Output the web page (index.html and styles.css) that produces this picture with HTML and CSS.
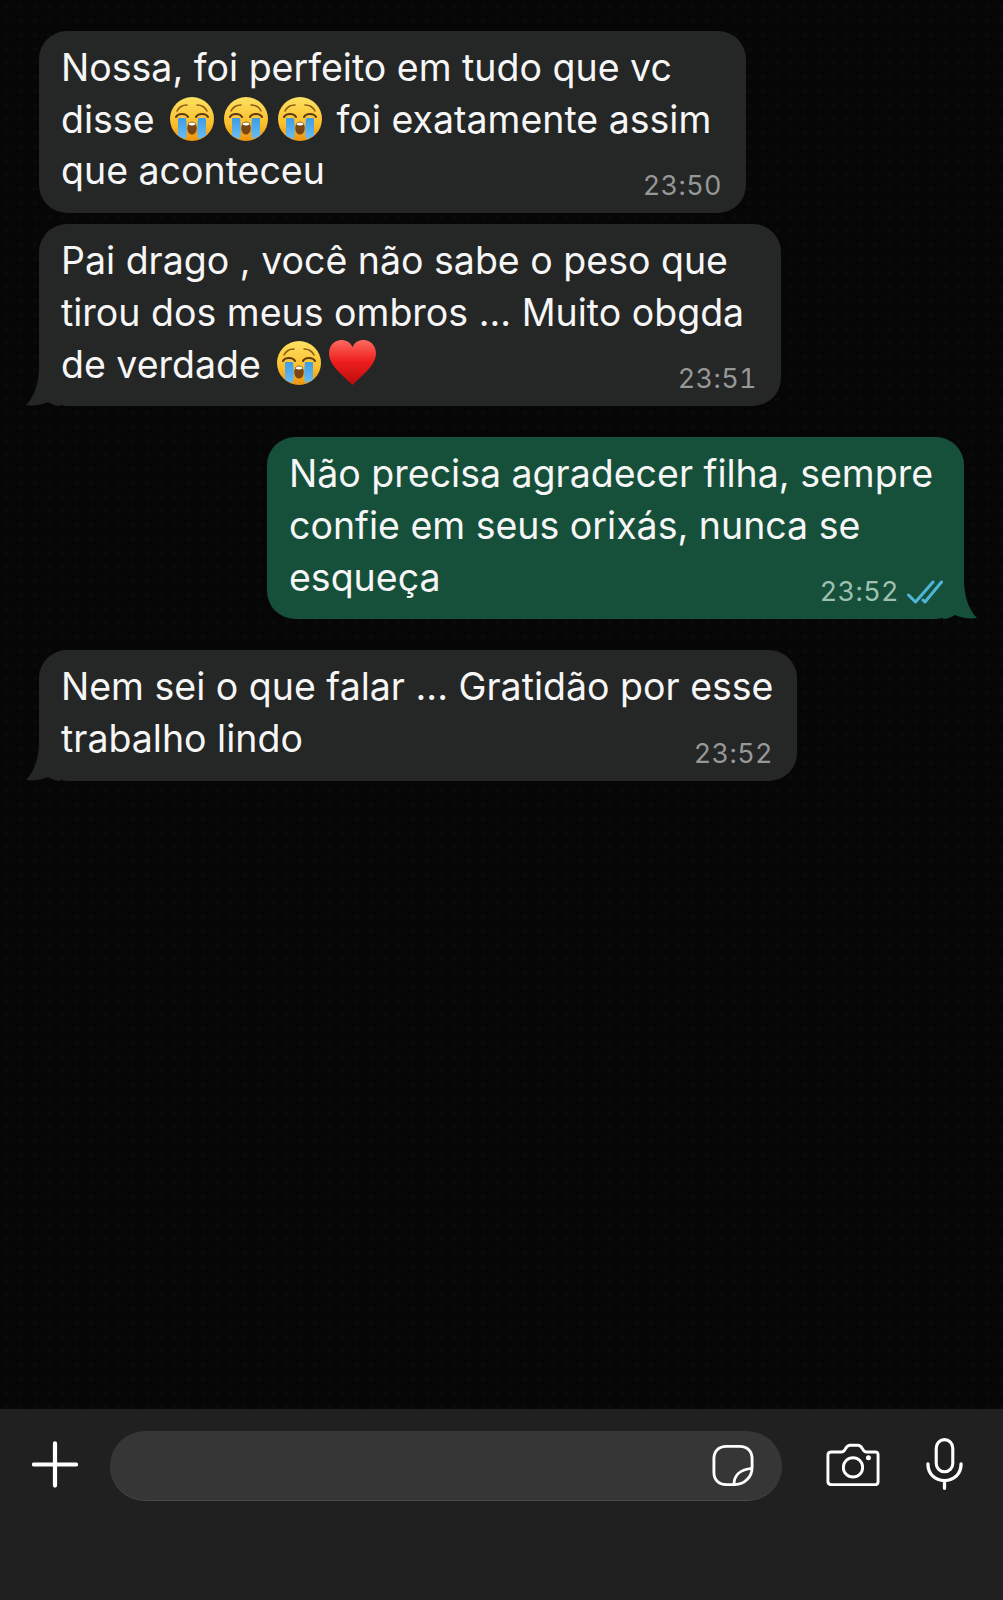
FILE: index.html
```html
<!doctype html>
<html>
<head>
<meta charset="UTF-8">
<title>Conversa</title>
<link rel="stylesheet" href="styles.css">
</head>

<body>
<svg class="defs" width="0" height="0">
	<defs>
		<linearGradient id="faceGrad" x1="0" y1="0" x2="0" y2="1">
			<stop offset="0" stop-color="#fde163"/>
			<stop offset="0.6" stop-color="#fbbf2c"/>
			<stop offset="1" stop-color="#ee9410"/>
		</linearGradient>
		<linearGradient id="tearGrad" x1="0" y1="0" x2="0" y2="1">
			<stop offset="0" stop-color="#3f9de6"/>
			<stop offset="1" stop-color="#69bdf2"/>
		</linearGradient>
		<linearGradient id="heartGrad" x1="0" y1="0" x2="0" y2="1">
			<stop offset="0" stop-color="#fd6a5e"/>
			<stop offset="0.5" stop-color="#ee1c1c"/>
			<stop offset="1" stop-color="#b80d0d"/>
		</linearGradient>
		<clipPath id="faceClip"><circle cx="22" cy="22" r="22"/></clipPath>
		<symbol id="cry" viewBox="0 0 44 44">
			<circle cx="22" cy="22" r="22" fill="url(#faceGrad)"/>
			<path d="M7 14c2-4 6-6 10-6M37 14c-2-4-6-6-10-6" fill="none" stroke="#8a5a12" stroke-width="1.5" stroke-linecap="round"/>
			<g clip-path="url(#faceClip)">
				<path d="M8 21h8c1 8 1 15 0 21l-8-3z" fill="url(#tearGrad)"/>
				<path d="M36 21h-8c-1 8-1 15 0 21l8-3z" fill="url(#tearGrad)"/>
			</g>
			<path d="M6 20c2-4 10-4 12 0M26 20c2-4 10-4 12 0" fill="none" stroke="#5e3a0c" stroke-width="2" stroke-linecap="round"/>
			<ellipse cx="22" cy="31" rx="4.8" ry="6.6" fill="#7a4712"/>
			<path d="M18.4 27.5c1-2.6 6.2-2.6 7.2 0-2 1.2-5.2 1.2-7.2 0z" fill="#fff"/>
		</symbol>
		<symbol id="tail" viewBox="0 0 34 40">
			<path d="M13 0C13 16 9 30 0 39c7 1 16 0 22-3 4 2 7 4 12 4V0z" fill="currentColor"/>
		</symbol>
	</defs>
</svg>

<div class="screen">
	<div class="chat">
		<div class="bubble in w1">
			<div class="line">Nossa, foi perfeito em tudo que vc</div>
			<div class="line">disse <span class="emojis"><svg class="emoji"><use href="#cry"/></svg><svg class="emoji"><use href="#cry"/></svg><svg class="emoji"><use href="#cry"/></svg></span> foi exatamente assim</div>
			<div class="line last"><span>que aconteceu</span><span class="time">23:50</span></div>
		</div>
		<div class="bubble in w2 grouped">
			<svg class="tail tail-left"><use href="#tail"/></svg>
			<div class="line">Pai drago , você não sabe o peso que</div>
			<div class="line">tirou dos meus ombros ... Muito obgda</div>
			<div class="line last"><span>de verdade <svg class="emoji solo"><use href="#cry"/></svg> <svg class="heart" viewBox="0 0 46 44"><path d="M23 44C14 35 0 25 0 13 0 5 6 0 12 0c5 0 9 2 11 7 2-5 6-7 11-7 6 0 12 5 12 13 0 12-14 22-23 31z" fill="url(#heartGrad)"/></svg></span><span class="time">23:51</span></div>
		</div>
		<div class="bubble out w3">
			<svg class="tail tail-right"><use href="#tail"/></svg>
			<div class="line">Não precisa agradecer filha, sempre</div>
			<div class="line">confie em seus orixás, nunca se</div>
			<div class="line last"><span>esqueça</span><span class="time">23:52<svg class="ticks" viewBox="0 0 36 25"><path d="M1.5 15l7 7L26 2M16 20l2 2L34.5 2" fill="none" stroke="#4fb6d9" stroke-width="3" stroke-linecap="round" stroke-linejoin="round"/></svg></span></div>
		</div>
		<div class="bubble in w4">
			<svg class="tail tail-left"><use href="#tail"/></svg>
			<div class="line">Nem sei o que falar ... Gratidão por esse</div>
			<div class="line last"><span>trabalho lindo</span><span class="time">23:52</span></div>
		</div>
	</div>

	<div class="composer">
		<svg class="icon plus" viewBox="0 0 48 48"><path d="M24 2v44M2 24h44" fill="none" stroke="#fff" stroke-width="4.4" stroke-linecap="round"/></svg>
		<div class="input">
			<svg class="icon sticker" viewBox="0 0 44 44"><path d="M15 2h14c8 0 13 5 13 13v9C42 34 34 42 24 42h-9C7 42 2 37 2 29V15C2 7 7 2 15 2z" fill="none" stroke="#fff" stroke-width="3"/><path d="M23 42c0-9 6-16 19-17" fill="none" stroke="#fff" stroke-width="3"/></svg>
		</div>
		<svg class="icon camera" viewBox="0 0 56 44"><path d="M6 9h10c2 0 3-1 4-3 1-2 3-4 5-4h8c3 0 4 2 5 4 1 2 2 3 4 3h9c2 0 3 1 3 3v28c0 2-1 3-3 3H6c-2 0-4-1-4-3V12c0-2 2-3 4-3z" fill="none" stroke="#fff" stroke-width="3"/><circle cx="28" cy="25" r="10" fill="none" stroke="#fff" stroke-width="3"/><circle cx="44" cy="15" r="2.6" fill="#fff"/></svg>
		<svg class="icon mic" viewBox="0 0 38 54"><rect x="10.5" y="2" width="17" height="33" rx="8.5" fill="none" stroke="#fff" stroke-width="3.2"/><path d="M2 27c0 10 7 17 17 17s17-7 17-17M19 44v8" fill="none" stroke="#fff" stroke-width="3.4" stroke-linecap="round"/></svg>
	</div>
</div>
</body>
</html>
```

FILE: styles.css
```css
*{ margin:0; padding:0; box-sizing:border-box; }
body{ background:#050505; font-family:"Inter","Liberation Sans",sans-serif; color:#f6f6f6; }
.defs{ display:block; height:0; }

.screen{ width:1003px; height:1600px; display:flex; flex-direction:column; overflow:hidden; }

.chat{ flex:1; display:flex; flex-direction:column; align-items:flex-start; gap:31px; padding:31px 39px 0; background-color:#060606; background-image:radial-gradient(circle,#0a0a0a 2px,transparent 3px); background-size:14px 14px; }

.bubble{ position:relative; padding:11px 24px 16px 22px; border-radius:28px; font-size:37.5px; line-height:51.7px; background:#252626; }
.bubble.grouped{ margin-top:-20px; }
.bubble.out{ background:#16503a; align-self:flex-end; }
.w1{ width:707px; }
.w2{ width:742px; }
.w3{ width:697px; }
.w4{ width:758px; }

.line{ white-space:nowrap; }
.line.last{ display:flex; justify-content:space-between; align-items:flex-end; }

.time{ display:flex; align-items:center; gap:8px; font-size:27px; line-height:32px; letter-spacing:0.4px; font-variant-numeric:tabular-nums; color:#969797; margin-bottom:-5px; }
.out .time{ color:#9fc0b1; }

.emojis{ display:inline-flex; gap:10px; margin:0 4px 0 5px; vertical-align:-8px; }
.emoji{ width:44px; height:44px; }
.emoji.solo{ margin-left:6px; vertical-align:-7px; }
.heart{ width:47px; height:45px; margin-left:-3px; vertical-align:-7px; }
.ticks{ width:36px; height:25px; margin-right:-3px; }

.tail{ position:absolute; bottom:0; width:34px; height:40px; color:#252626; }
.tail-left{ left:-13px; }
.tail-right{ right:-13px; transform:scaleX(-1); color:#16503a; }

.composer{ height:191px; flex:none; display:flex; align-items:flex-start; padding:22px 40px 0 32px; background:#202020; }
.icon{ display:block; flex:none; }
.plus{ width:46px; height:47px; margin-top:10px; }
.input{ width:672px; height:70px; margin-left:32px; padding:13px 28px 0 0; display:flex; justify-content:flex-end; background:#363636; border-radius:35px; border-bottom:1px solid #4a4a4a; }
.sticker{ width:42px; height:43px; }
.camera{ width:54px; height:43px; margin:12px 0 0 44px; }
.mic{ width:37px; height:54px; margin:6px 0 0 46px; }
```
